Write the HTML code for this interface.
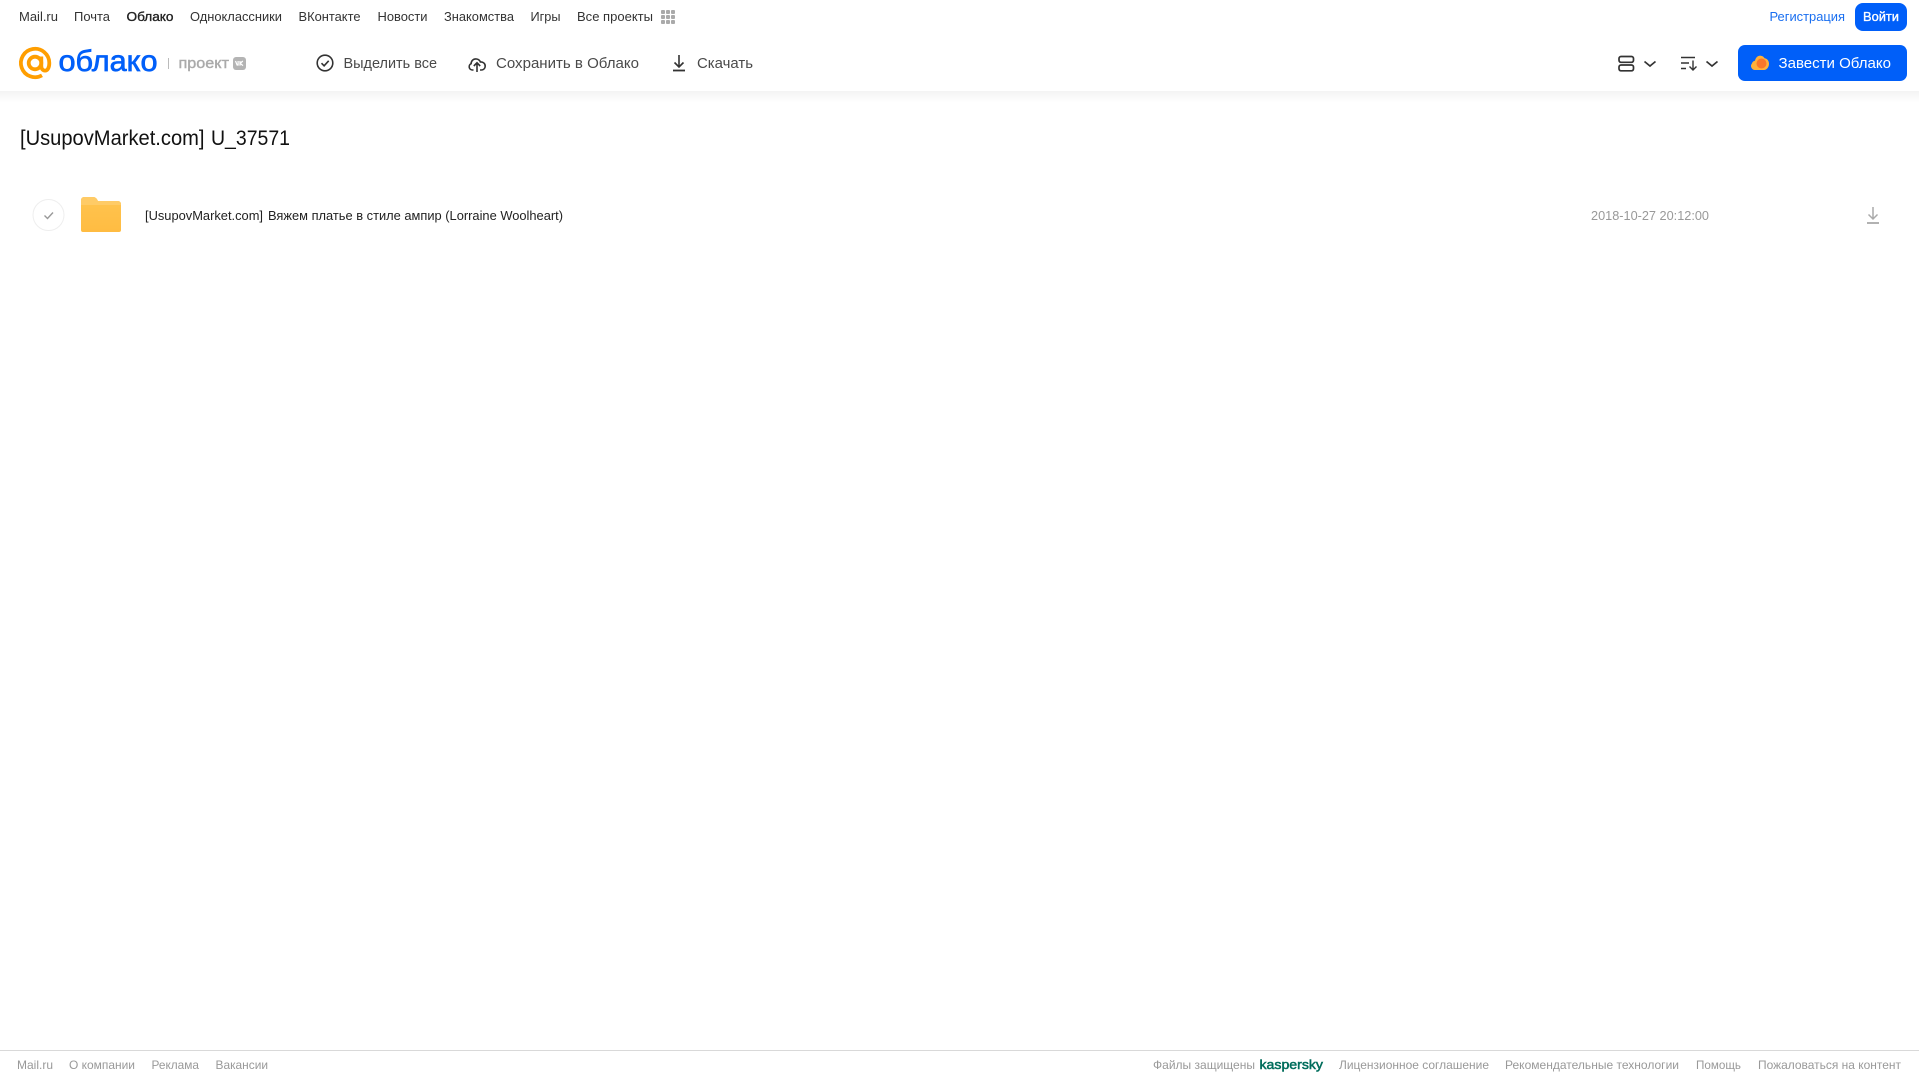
<!DOCTYPE html>
<html lang="ru"><head><meta charset="utf-8"><title>[UsupovMarket.com] U_37571</title>
<style>
html,body{margin:0;padding:0;background:#fff;width:1919px;height:1079px;overflow:hidden}
svg{display:block;position:absolute;left:0;top:0}
text{font-family:"Liberation Sans",sans-serif;white-space:pre}
.n{font-size:13px;fill:#333}
.h{font-size:15px;fill:#4a4a4a}
.f{font-size:12px;fill:#999}
</style></head><body>
<svg width="1919" height="1079" viewBox="0 0 1919 1079" xmlns="http://www.w3.org/2000/svg">
<defs><linearGradient id="s" x1="0" y1="0" x2="0" y2="1"><stop offset="0" stop-color="#f3f3f3"/><stop offset="1" stop-color="#fff"/></linearGradient>
<linearGradient id="fd" x1="0" y1="0" x2="0" y2="1"><stop offset="0" stop-color="#ffc44f"/><stop offset="1" stop-color="#ffbc42"/></linearGradient></defs>
<rect x="0" y="91" width="1919" height="12" fill="url(#s)"/>

<!-- top nav -->
<text class="n" x="19" y="21" textLength="39" lengthAdjust="spacingAndGlyphs">Mail.ru</text>
<text class="n" x="74" y="21" textLength="36" lengthAdjust="spacingAndGlyphs">Почта</text>
<text class="n" x="126.500" y="21" textLength="47" lengthAdjust="spacingAndGlyphs" style="fill:#222;stroke:#222;stroke-width:.35">Облако</text>
<text class="n" x="190" y="21" textLength="92" lengthAdjust="spacingAndGlyphs">Одноклассники</text>
<text class="n" x="298.500" y="21" textLength="62" lengthAdjust="spacingAndGlyphs">ВКонтакте</text>
<text class="n" x="377.500" y="21" textLength="50" lengthAdjust="spacingAndGlyphs">Новости</text>
<text class="n" x="444" y="21" textLength="70" lengthAdjust="spacingAndGlyphs">Знакомства</text>
<text class="n" x="530.500" y="21" textLength="30" lengthAdjust="spacingAndGlyphs">Игры</text>
<text class="n" x="577" y="21" textLength="76" lengthAdjust="spacingAndGlyphs">Все проекты</text>
<g fill="#aaa">
<rect x="661" y="10" width="4" height="4" rx="1"/><rect x="666" y="10" width="4" height="4" rx="1"/><rect x="671" y="10" width="4" height="4" rx="1"/>
<rect x="661" y="15" width="4" height="4" rx="1"/><rect x="666" y="15" width="4" height="4" rx="1"/><rect x="671" y="15" width="4" height="4" rx="1"/>
<rect x="661" y="20" width="4" height="4" rx="1"/><rect x="666" y="20" width="4" height="4" rx="1"/><rect x="671" y="20" width="4" height="4" rx="1"/>
</g>
<text class="n" x="1769.500" y="21" textLength="75.500" lengthAdjust="spacingAndGlyphs" style="fill:#1a6ff0">Регистрация</text>
<rect x="1855" y="3" width="52" height="28" rx="8" fill="#005ff9"/>
<text class="n" x="1863" y="21" textLength="36" lengthAdjust="spacingAndGlyphs" style="fill:#fff;stroke:#fff;stroke-width:.35">Войти</text>

<!-- logo -->
<g fill="none" stroke="#ff9e00" stroke-width="3.800">
<circle cx="35" cy="63" r="6.300"/>
<path d="M41.300 56.500V66c0 3 1.600 4.600 3.700 4.600 2.600 0 4.300-3 4.300-7.600A14.200 14.200 0 1 0 42 75.400"/>
</g>
<text x="58.500" y="71" font-size="30" textLength="99" lengthAdjust="spacingAndGlyphs" fill="#005ff9" stroke="#005ff9" stroke-width=".7">облако</text>
<rect x="168" y="58" width="1" height="11" fill="#bbb"/>
<text x="178.500" y="68" font-size="15" textLength="50.500" lengthAdjust="spacingAndGlyphs" fill="#aaa" stroke="#aaa" stroke-width=".4">проект</text>
<rect x="233" y="57" width="13" height="13" rx="3" fill="#b4b4b4"/>
<path d="M235.500 61l1.600 4h1V61M242.800 61l-2.600 2.400 2.800 2.200M240 61v4.600" fill="none" stroke="#fff" stroke-width="1.200"/>

<!-- toolbar -->
<g fill="none" stroke="#333" stroke-width="1.600">
<circle cx="325" cy="63" r="7.800"/>
<path d="M321.500 63.200l2.600 2.600 4.600-5"/>
<path d="M473.500 70H472.500a3.300 3.300 0 0 1-1.400-6.300c.1-3.200 2.600-5.100 5.400-4.700 1.900.3 3.300 1.300 3.900 3 2.900-.3 4.900 1.700 4.800 4.200-.1 2.100-1.500 3.800-3.800 3.800H480"/>
<path d="M477 72v-9M473.800 66l3.200-3.200 3.200 3.200"/>
<path d="M679 55v12M674.500 62.500L679 67l4.500-4.500"/>
<path d="M673 70.500h12" stroke-width="1.800"/>
</g>
<text class="h" x="343.500" y="68" textLength="93.500" lengthAdjust="spacingAndGlyphs">Выделить все</text>
<text class="h" x="496" y="68" textLength="143" lengthAdjust="spacingAndGlyphs">Сохранить в Облако</text>
<text class="h" x="697" y="68" textLength="56" lengthAdjust="spacingAndGlyphs">Скачать</text>

<!-- right controls -->
<g fill="none" stroke="#333" stroke-width="1.700">
<rect x="1619" y="56.500" width="14.500" height="5.800" rx="2"/>
<rect x="1619" y="65" width="14.500" height="5.800" rx="2"/>
<path d="M1644.500 61.500l5.500 4.500 5.500-4.500"/>
<path d="M1681 57.500h14M1681 63h8M1681 68.500h5" stroke-width="1.400"/>
<path d="M1693 60.500v9M1689.500 66.500l3.500 3.500 3.500-3.500" stroke-width="1.400"/>
<path d="M1706.500 61.500l5.500 4.500 5.500-4.500"/>
</g>
<rect x="1738" y="45" width="169" height="36" rx="7" fill="#005ff9"/>
<path d="M1755 70a4 4 0 0 1-3-6.600c.4-1.500 1.500-2.500 3-2.700.6-3.100 3-5.200 5.600-5 1.900.1 3.200 1.100 4 2.600 2.700.4 4.400 2.600 4.400 5.500 0 3.300-2.200 6.200-5 6.200z" fill="#ffb13b"/>
<circle cx="1761.500" cy="63.500" r="5" fill="#f9772b"/>
<text x="1778.500" y="68" font-size="15" textLength="112.500" lengthAdjust="spacingAndGlyphs" fill="#fff">Завести Облако</text>

<!-- title -->
<text x="20" y="145" font-size="21" textLength="184.500" lengthAdjust="spacingAndGlyphs" fill="#111">[UsupovMarket.com]</text>
<text x="211" y="145" font-size="21" textLength="79" lengthAdjust="spacingAndGlyphs" fill="#111">U_37571</text>

<!-- row -->
<circle cx="48.500" cy="215" r="15.500" fill="#fff" stroke="#eeeeee" stroke-width="1"/>
<path d="M44.500 215.500l3 3 5.500-6" fill="none" stroke="#999" stroke-width="1.400"/>
<path d="M81 200a3 3 0 0 1 3-3h9c2 0 3 .8 4 2.200l1 1.800h20a3 3 0 0 1 3 3v26a2 2 0 0 1-2 2H83a2 2 0 0 1-2-2z" fill="url(#fd)"/>
<path d="M81 205h40v-1a3 3 0 0 0-3-3H98l-1-1.800c-1-1.400-2-2.200-4-2.200h-9a3 3 0 0 0-3 3z" fill="#ffcb66"/>
<text x="145" y="220" font-size="13" textLength="118" lengthAdjust="spacingAndGlyphs" fill="#222">[UsupovMarket.com]</text>
<text x="268" y="220" font-size="13" textLength="295" lengthAdjust="spacingAndGlyphs" fill="#222">Вяжем платье в стиле ампир (Lorraine Woolheart)</text>
<text x="1591" y="220" font-size="13" textLength="118" lengthAdjust="spacingAndGlyphs" fill="#999">2018-10-27 20:12:00</text>
<g fill="none" stroke="#aaa" stroke-width="1.500">
<path d="M1873 207v12M1868.500 214.500l4.500 4.500 4.500-4.500"/>
<path d="M1867 223h12" stroke-width="1.800"/>
</g>

<!-- footer -->
<rect x="0" y="1050" width="1919" height="1" fill="#d9d9d9"/>
<text class="f" x="17" y="1069" textLength="36" lengthAdjust="spacingAndGlyphs">Mail.ru</text>
<text class="f" x="69" y="1069" textLength="66" lengthAdjust="spacingAndGlyphs">О компании</text>
<text class="f" x="151.500" y="1069" textLength="47.500" lengthAdjust="spacingAndGlyphs">Реклама</text>
<text class="f" x="215.500" y="1069" textLength="52.500" lengthAdjust="spacingAndGlyphs">Вакансии</text>
<text class="f" x="1153" y="1069" textLength="102" lengthAdjust="spacingAndGlyphs">Файлы защищены</text>
<text x="1259.500" y="1069" font-size="13" textLength="63.500" lengthAdjust="spacingAndGlyphs" fill="#006d5c" stroke="#006d5c" stroke-width=".5">kaspersky</text>
<text class="f" x="1339" y="1069" textLength="150" lengthAdjust="spacingAndGlyphs">Лицензионное соглашение</text>
<text class="f" x="1505" y="1069" textLength="174" lengthAdjust="spacingAndGlyphs">Рекомендательные технологии</text>
<text class="f" x="1696" y="1069" textLength="45" lengthAdjust="spacingAndGlyphs">Помощь</text>
<text class="f" x="1758" y="1069" textLength="143" lengthAdjust="spacingAndGlyphs">Пожаловаться на контент</text>
</svg>
</body></html>
